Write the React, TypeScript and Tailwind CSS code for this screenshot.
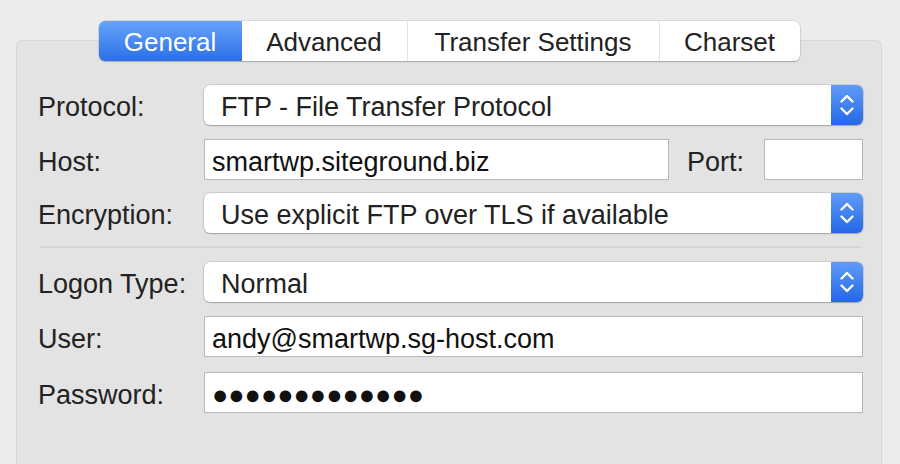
import React from "react";

function Stepper() {
  return (
    <div className="w-[32px] h-full rounded-r-[6px] bg-gradient-to-b from-[#5f9cf8] to-[#2467e6] flex items-center justify-center">
      <svg width="18" height="26" viewBox="0 0 18 26" fill="none">
        <path d="M3.5 9.5 L9 4 L14.5 9.5" stroke="white" strokeWidth="2.4" strokeLinecap="round" strokeLinejoin="round" />
        <path d="M3.5 16.5 L9 22 L14.5 16.5" stroke="white" strokeWidth="2.4" strokeLinecap="round" strokeLinejoin="round" />
      </svg>
    </div>
  );
}

function Select({ value }: { value: string }) {
  return (
    <div className="flex-1 h-[40px] flex bg-white rounded-[6px] shadow-[0_0_0_0.5px_rgba(0,0,0,0.18),0_1px_1.5px_rgba(0,0,0,0.22)]">
      <div className="flex-1 flex items-center pl-[17px] pt-[5px] text-[27px] text-[#222] leading-none">{value}</div>
      <Stepper />
    </div>
  );
}

function Input({ value, className = "flex-1" }: { value: string; className?: string }) {
  return (
    <div className={`${className} h-[41px] bg-white border border-[#b8b8b8] flex items-center pl-[7px] pt-[5px] text-[27px] text-[#111] leading-none`}>
      {value}
    </div>
  );
}

function Label({ children }: { children: React.ReactNode }) {
  return <div className="w-[166px] shrink-0 pt-[5px] text-[27px] text-[#222] leading-none">{children}</div>;
}

export default function App() {
  const tabs = [
    { name: "General", w: "w-[143px]", active: true },
    { name: "Advanced", w: "w-[165px]", active: false },
    { name: "Transfer Settings", w: "w-[252px]", active: false },
    { name: "Charset", w: "w-[141px]", active: false },
  ];
  return (
    <div
      className="w-[900px] h-[464px] bg-[#ececec] overflow-hidden pt-[40px] pl-[16px] pr-[18px] flex"
      style={{ fontFamily: '"Liberation Sans", Arial, sans-serif' }}
    >
      <div className="flex-1 h-[460px] bg-[#e3e3e3] border border-b-0 border-[#d7d7d7] rounded-t-[6px] flex flex-col">
        <div className="flex justify-center -mt-[20px] relative z-10">
          <div className="flex h-[40px] bg-white rounded-[6px] shadow-[0_0_0_0.5px_rgba(0,0,0,0.15),0_1px_1.5px_rgba(0,0,0,0.2)]">
            {tabs.map((t, i) => (
              <div
                key={t.name}
                className={`${t.w} flex items-center justify-center pt-[2px] text-[26px] leading-none ${
                  t.active
                    ? "bg-gradient-to-b from-[#67a3f9] to-[#2b6fe8] text-white rounded-l-[6px]"
                    : "text-[#222]"
                } ${i > 1 ? "border-l border-[#e2e2e2]" : ""}`}
              >
                {t.name}
              </div>
            ))}
          </div>
        </div>

        <div className="flex flex-col pl-[21px] pr-[18px] mt-[24px]">
          <div className="flex items-center">
            <Label>Protocol:</Label>
            <Select value="FTP - File Transfer Protocol" />
          </div>
          <div className="flex items-center mt-[14px]">
            <Label>Host:</Label>
            <Input value="smartwp.siteground.biz" className="w-[465px]" />
            <div className="w-[95px] pl-[18px] pt-[5px] text-[27px] text-[#222] leading-none">Port:</div>
            <Input value="" className="flex-1" />
          </div>
          <div className="flex items-center mt-[13px]">
            <Label>Encryption:</Label>
            <Select value="Use explicit FTP over TLS if available" />
          </div>
          <div className="h-[2px] bg-[#d5d5d5] mt-[13px] ml-[2px] mr-[2px]" />
          <div className="flex items-center mt-[14px]">
            <Label>Logon Type:</Label>
            <Select value="Normal" />
          </div>
          <div className="flex items-center mt-[14px]">
            <Label>User:</Label>
            <Input value="andy@smartwp.sg-host.com" />
          </div>
          <div className="flex items-center mt-[15px]">
            <Label>Password:</Label>
            <Input value="●●●●●●●●●●●●●" />
          </div>
        </div>
      </div>
    </div>
  );
}
